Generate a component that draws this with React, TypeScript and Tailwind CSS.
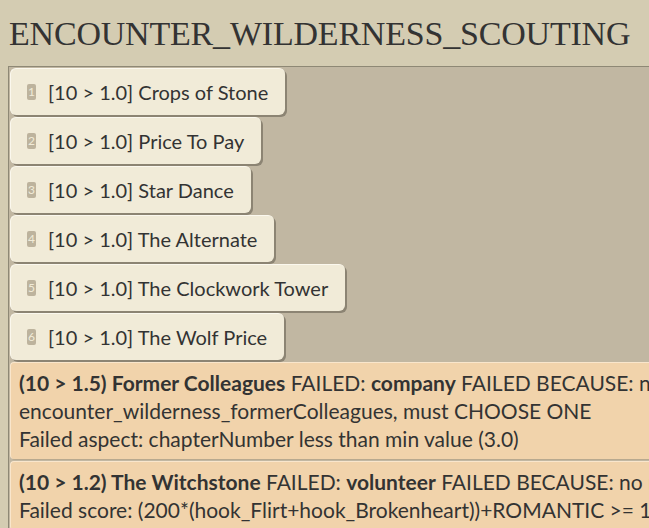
import React from 'react';

const items = [
  'Crops of Stone',
  'Price To Pay',
  'Star Dance',
  'The Alternate',
  'The Clockwork Tower',
  'The Wolf Price',
];

export default function App() {
  return (
    <div
      className="w-[649px] h-[528px] overflow-hidden bg-[#d4ccb2] text-[#333]"
      style={{ fontFamily: 'Lato, "Noto Sans", sans-serif' }}
    >
      <h1
        className="pl-[9px] pt-[14px] h-[66px] text-[34px] leading-[40px] text-[#333] tracking-[-0.2px]"
        style={{ fontFamily: '"Liberation Serif", serif' }}
      >
        ENCOUNTER_WILDERNESS_SCOUTING
      </h1>

      <div className="ml-[8px] w-[900px] border-t border-l border-[#8e8875] bg-[#c1b7a2] pl-[1px] pt-[1px] flex flex-col gap-[2px]">
        {items.map((t, i) => (
          <div key={t} className="flex">
            <button className="flex items-center h-[47px] pl-[16px] pr-[17px] rounded-[6px] bg-[#f1ebd8] border-t border-l border-[#fbf8ee] shadow-[2px_2px_0_#8c8473] text-[20px]">
              <span className="w-[9px] h-[16px] rounded-[2px] bg-[#bdb39d] text-[#f1ebd8] text-[12px] leading-[16px] text-center mr-[12px]">
                {i + 1}
              </span>
              <span>[10 &gt; 1.0] {t}</span>
            </button>
          </div>
        ))}

        <div className="rounded-[4px] bg-[#f1d3ab] border-t border-l border-[#f9e6cc] shadow-[1px_1px_0_#b8a98f] pl-[8px] pt-[6px] pb-[6px] text-[21px] leading-[28px]">
          <b>(10 &gt; 1.5) Former Colleagues</b> FAILED: <b>company</b> FAILED BECAUSE: no valid options in
          <br />
          encounter_wilderness_formerColleagues, must CHOOSE ONE
          <br />
          Failed aspect: chapterNumber less than min value (3.0)
        </div>

        <div className="rounded-[4px] bg-[#f1d3ab] border-t border-l border-[#f9e6cc] pl-[8px] pt-[6px] pb-[6px] text-[21px] leading-[28px]">
          <b>(10 &gt; 1.2) The Witchstone</b> FAILED: <b>volunteer</b> FAILED BECAUSE: no matching options
          <br />
          Failed score: (200*(hook_Flirt+hook_Brokenheart))+ROMANTIC &gt;= 100
        </div>
      </div>
    </div>
  );
}
